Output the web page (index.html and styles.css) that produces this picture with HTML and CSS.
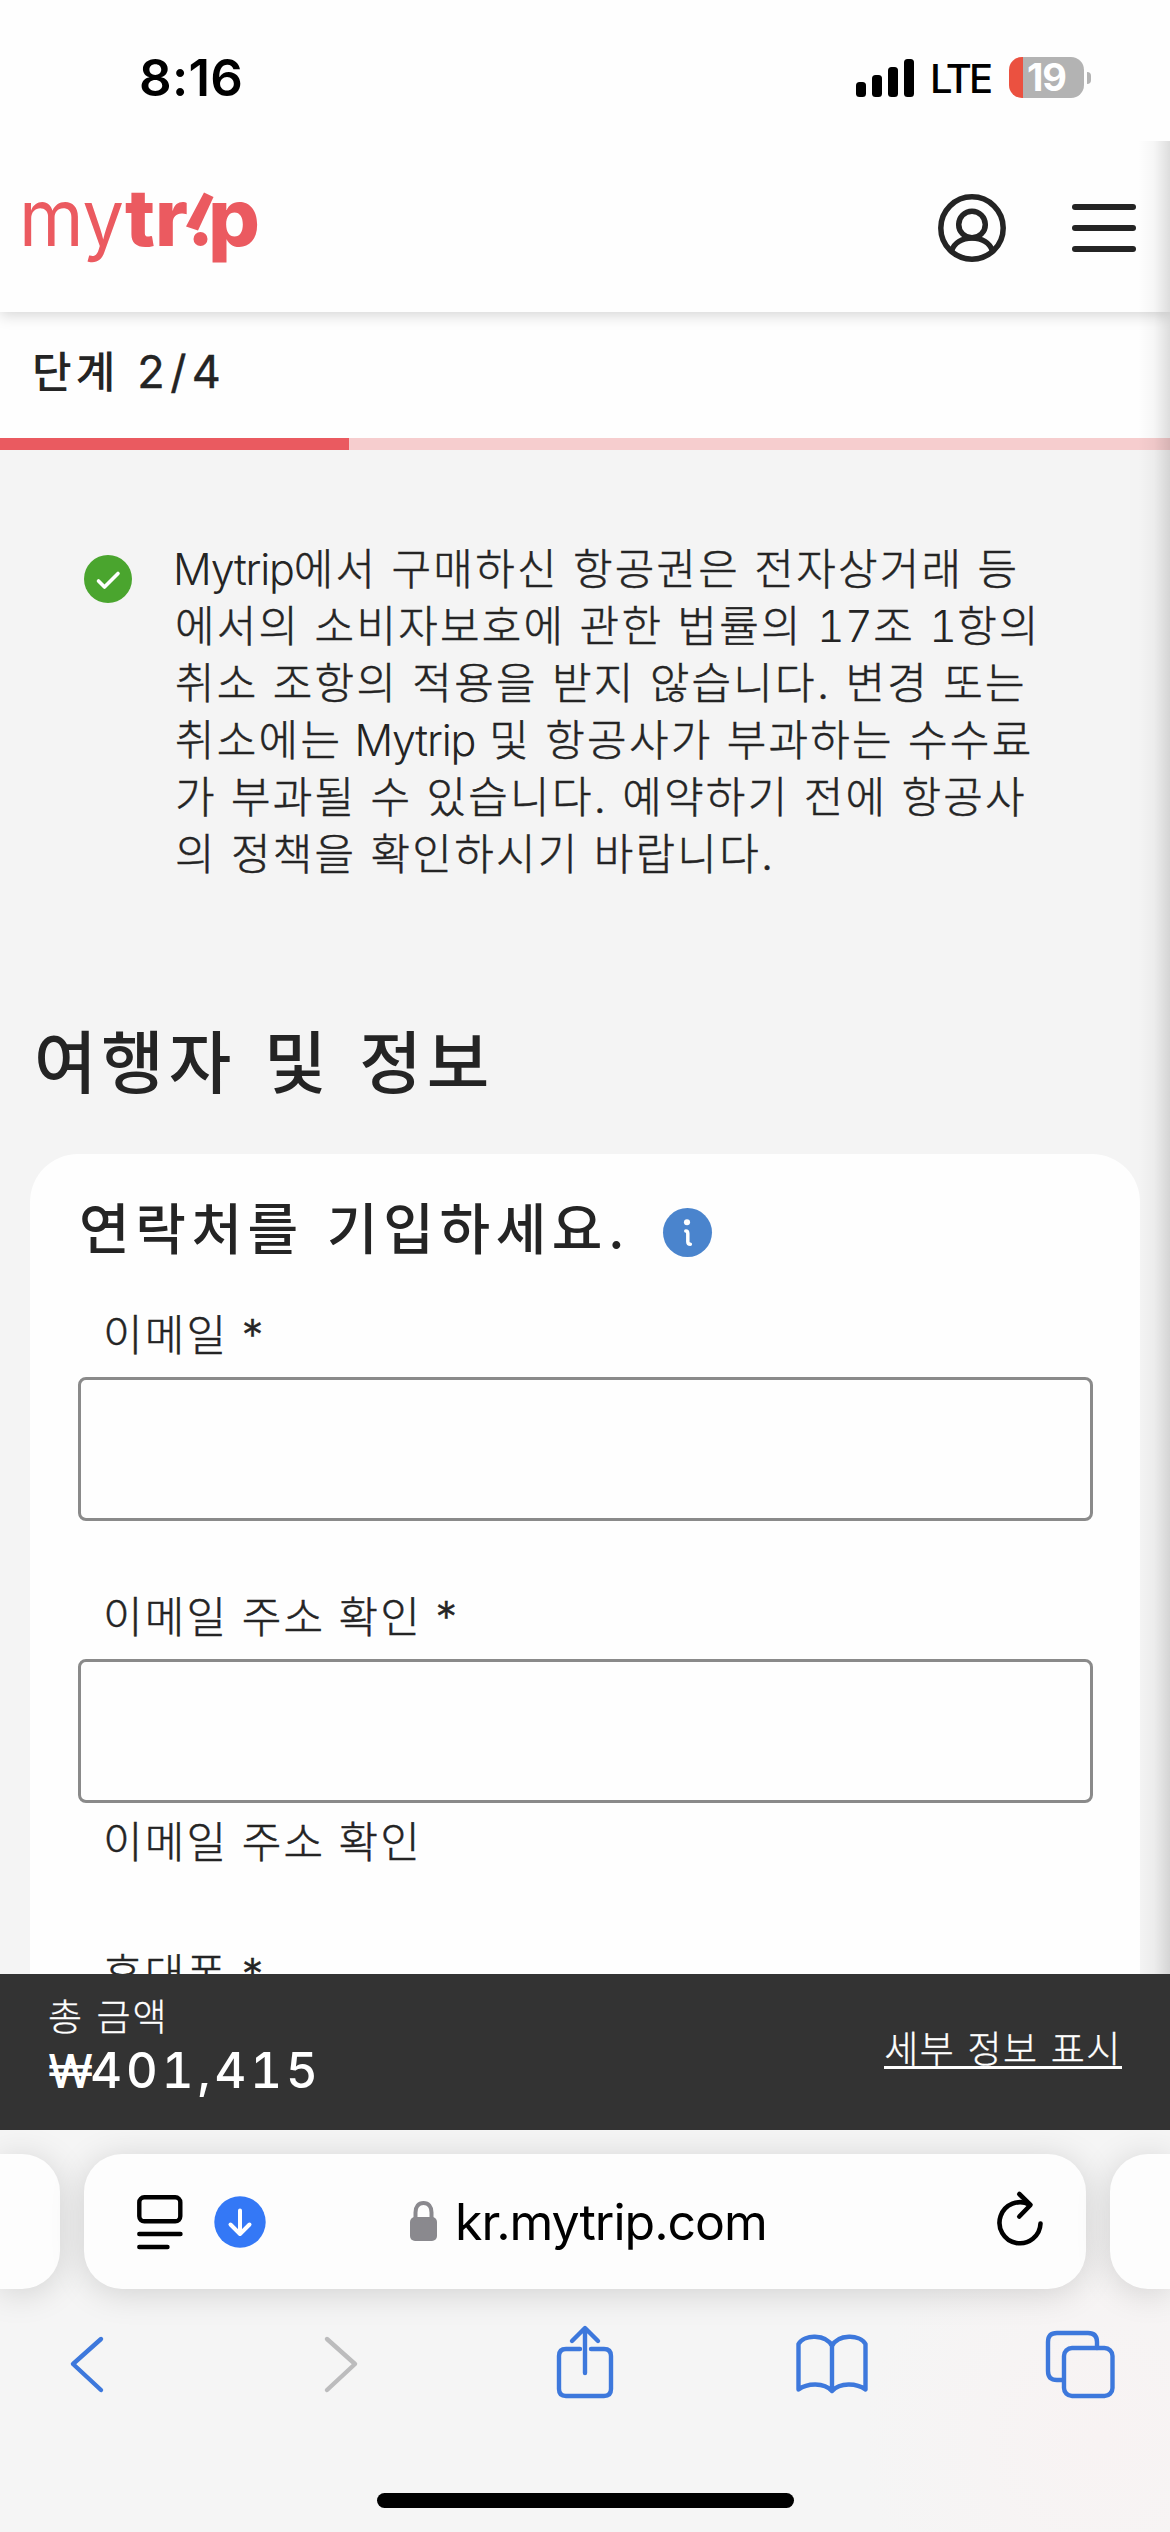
FILE: index.html
```html
<!DOCTYPE html>
<html lang="ko">
<head>
<meta charset="utf-8">
<title>Mytrip</title>
<link rel="stylesheet" href="styles.css">
</head>
<body>
<div class="phone">
  <div class="status">
    <div class="time">8:16</div>
    <div class="status-right">
      <svg class="signal" viewBox="0 0 58 38"><rect x="0" y="23" width="10" height="15" rx="3.5"/><rect x="16" y="16" width="10" height="22" rx="3.5"/><rect x="32" y="8" width="10" height="30" rx="3.5"/><rect x="48" y="0" width="10" height="38" rx="3.5"/></svg>
      <span class="network">LTE</span>
      <div class="battery"><span class="level">19</span></div>
      <span class="nub"></span>
    </div>
  </div>

  <div class="page">
    <header class="header">
      <svg class="logo" viewBox="0 0 240 84">
        <text class="logo-thin" x="-2" y="61" textLength="105" lengthAdjust="spacingAndGlyphs">my</text>
        <text class="logo-bold" x="104" y="61" textLength="63" lengthAdjust="spacingAndGlyphs">tr</text>
        <path d="M183 7.500L192.500 12L177 45.500L165 41.500Z"/>
        <circle cx="179.500" cy="54" r="7"/>
        <text class="logo-bold" x="187" y="61" textLength="52" lengthAdjust="spacingAndGlyphs">p</text>
      </svg>
      <div class="header-actions">
        <svg class="user" viewBox="0 0 68 68"><circle cx="34" cy="34" r="31.200"/><circle cx="34" cy="30.500" r="13.300"/><path d="M13.500 57C16 49 24 44 34 44S52 49 54.500 57"/></svg>
        <div class="menu"><i></i><i></i><i></i></div>
      </div>
    </header>

    <div class="step">단계 <span class="step-num">2/4</span></div>
    <div class="progress"><div class="progress-fill"></div></div>

    <main class="main">
      <div class="notice">
        <svg class="check" viewBox="0 0 48 48"><circle cx="24" cy="24" r="24"/><path d="M14.500 26L20.500 32L34 18.500"/></svg>
        <p class="notice-text"><span class="line"><span class="latin">Mytrip</span>에서 구매하신 항공권은 전자상거래 등</span><span class="line">에서의 소비자보호에 관한 법률의 <span class="num">17</span>조 <span class="num">1</span>항의</span><span class="line">취소 조항의 적용을 받지 않습니다. 변경 또는</span><span class="line">취소에는 <span class="latin">Mytrip</span> 및 항공사가 부과하는 수수료</span><span class="line">가 부과될 수 있습니다. 예약하기 전에 항공사</span><span class="line">의 정책을 확인하시기 바랍니다.</span></p>
      </div>

      <h1 class="title">여행자 및 정보</h1>

      <section class="card">
        <div class="card-head">
          <h2 class="card-title">연락처를 기입하세요.</h2>
          <svg class="info" viewBox="0 0 48 48"><circle cx="24" cy="24" r="24"/><path d="M22.300 22.500Q24.300 22.500 24.300 25V33Q24.300 35.500 26.800 35.500"/><circle class="dot" cx="23.500" cy="14" r="3"/></svg>
        </div>
        <label class="label">이메일 *</label>
        <div class="input"></div>
        <label class="label label-next">이메일 주소 확인 *</label>
        <div class="input"></div>
        <div class="hint">이메일 주소 확인</div>
        <label class="label label-phone">휴대폰 *</label>
      </section>
    </main>
    <div class="edge-shadow"></div>
  </div>

  <div class="total">
    <div class="total-left">
      <div class="total-label">총 금액</div>
      <div class="total-price"><span class="won">₩</span>401,415</div>
    </div>
    <a class="details">세부 정보 표시</a>
  </div>

  <div class="browser">
    <div class="tabs">
      <div class="tab tab-prev"></div>
      <div class="tab tab-current">
        <svg class="reader" viewBox="0 0 46 54"><rect x="2.300" y="2.300" width="41" height="24" rx="5"/><path d="M2.300 39H43.500M2.300 52H30.500"/></svg>
        <svg class="download" viewBox="0 0 52 52"><circle cx="26" cy="26" r="25.700"/><path d="M26 14.500V37M16.500 28.500L26 38L35.500 28.500"/></svg>
        <svg class="lock" viewBox="0 0 27 40"><rect x="0" y="16" width="27" height="24" rx="5"/><path d="M5.500 18V11.500C5.500 5.500 8.500 2 13.500 2S21.500 5.500 21.500 11.500V18"/></svg>
        <span class="url">kr.mytrip.com</span>
        <svg class="reload" viewBox="0 0 50 60"><path d="M45.500 33.500A20.500 20.500 0 1 1 34.500 14.600"/><path d="M24.300 4L35.500 15L24.300 26.500"/></svg>
      </div>
      <div class="tab tab-next"></div>
    </div>
    <div class="tools">
      <svg class="tool back" viewBox="0 0 80 80"><path d="M55 16L27 41L55 67"/></svg>
      <svg class="tool forward" viewBox="0 0 80 80"><path d="M27 16L55 41L27 67"/></svg>
      <svg class="tool" viewBox="0 0 80 80"><path d="M34 26H20Q13 26 13 33V66Q13 73 20 73H58Q65 73 65 66V33Q65 26 58 26H45M39 50V6M26 18L39 5L52 18"/></svg>
      <svg class="tool" viewBox="0 0 80 80"><path d="M40 68V23C34 11 12 11 6.500 21V66.500C15 60 32 59 40 68C48 59 65 60 73.500 66.500V21C68 11 46 11 40 23"/></svg>
      <svg class="tool" viewBox="0 0 80 80"><path d="M25 57H19Q10 57 10 48V19Q10 10 19 10H50Q59 10 59 19V25"/><rect x="26" y="25" width="48.500" height="48" rx="8"/></svg>
    </div>
    <div class="home"></div>
  </div>
</div>
</body>
</html>
```
FILE: styles.css
```css
* { box-sizing: border-box; }
body {
  margin: 0;
  background: #f4f4f4;
  color: #242424;
  font-family: Inter, "Noto Sans CJK KR", sans-serif;
}
svg { display: block; flex: none; fill: none; stroke-linecap: round; stroke-linejoin: round; overflow: visible; }
.phone { width: 1170px; height: 2532px; overflow: hidden; display: flex; flex-direction: column; }

/* status bar */
.status { height: 141px; flex: none; background: #fefefe; color: #000; display: flex; justify-content: space-between; padding: 0 79px 0 139px; }
.time { font-size: 51px; font-weight: 600; line-height: 60px; margin-top: 48px; letter-spacing: 0.3px; }
.status-right { display: flex; height: 41px; margin-top: 57px; align-items: center; }
.signal { width: 58px; height: 38px; fill: #000; }
.network { font-size: 40px; font-weight: 500; line-height: 44px; width: 63px; margin: 3px 13px 0 16px; letter-spacing: -3px; }
.battery { width: 75px; height: 41px; border-radius: 13px; background: linear-gradient(90deg, #eb5140 14px, #b3b3b3 14px); display: flex; justify-content: center; align-items: center; margin-left: 3px; }
.level { color: #fff; font-weight: 700; font-size: 38px; line-height: 41px; letter-spacing: -1px; }
.nub { width: 4px; height: 12px; margin-left: 3px; border-radius: 0 4px 4px 0; background: #b3b3b3; }

/* page */
.page { height: 1833px; flex: none; position: relative; overflow: hidden; }
.header { height: 171px; background: #fefefe; position: relative; display: flex; justify-content: space-between; padding: 44px 34px 0 21px; box-shadow: 0 3px 14px rgba(0, 0, 0, .17); }
.logo { width: 240px; height: 84px; fill: #eb5a60; }
.logo text { font-size: 79px; }
.logo-thin { font-weight: 400; }
.logo-bold { font-weight: 800; }
.header-actions { display: flex; gap: 66px; padding-top: 9px; }
.user { width: 68px; height: 68px; stroke: #242424; stroke-width: 5.5; }
.menu { width: 64px; height: 48px; margin-top: 10px; display: flex; flex-direction: column; justify-content: space-between; }
.menu i { height: 6px; border-radius: 3px; background: #242424; }
.step { height: 126px; background: #fefefe; padding: 31px 32px; font-size: 43px; font-weight: 500; line-height: 58px; letter-spacing: 4.2px; word-spacing: 2px; }
.step-num { font-size: 45px; font-weight: 400; letter-spacing: 5.5px; -webkit-text-stroke: .4px #242424; }
.progress { height: 12px; background: #f6cdce; }
.progress-fill { width: 349px; height: 12px; background: #ea5a60; }
.main { background: #f4f4f4; padding: 91px 30px 0; }
.notice { display: flex; padding-left: 54px; }
.check { width: 48px; height: 48px; margin-top: 14px; fill: #4aa52e; }
.check path { fill: none; stroke: #fff; stroke-width: 3.6; }
.notice-text { margin: 0 0 0 43px; font-size: 43px; font-weight: 300; line-height: 57px; letter-spacing: 2.25px; word-spacing: -.2px; -webkit-text-stroke: .5px #242424; }
.line { display: block; white-space: nowrap; }
.latin { letter-spacing: -1.2px; margin-left: -2px; -webkit-text-stroke: 0; }
.num { letter-spacing: .3px; font-feature-settings: "tnum"; -webkit-text-stroke: 0; }
.title { margin: 140px 0 0 4px; font-size: 68px; font-weight: 500; line-height: 80px; letter-spacing: 4.8px; word-spacing: 5px; }
.card { margin-top: 51px; height: 900px; padding: 44px 47px 0 48px; border-radius: 48px 48px 0 0; background: #fefefe; }
.card-head { display: flex; align-items: center; height: 62px; }
.card-title { margin: 0 0 0 1px; font-size: 55px; font-weight: 500; line-height: 62px; letter-spacing: 5.6px; word-spacing: 3px; }
.info { width: 49px; height: 49px; margin-left: 33px; margin-top: 7px; fill: #4a84cd; }
.info path { fill: none; stroke: #fff; stroke-width: 3.4; }
.info .dot { fill: #fff; }
.label, .hint { display: block; font-size: 43px; font-weight: 300; line-height: 58px; letter-spacing: 2.2px; word-spacing: -.9px; padding-left: 25px; -webkit-text-stroke: .5px #242424; }
.label { margin-top: 46px; }
.input { height: 144px; margin-top: 13px; border: 3px solid #8a8a8a; border-radius: 8px; }
.label-next { margin-top: 67px; }
.hint { margin-top: 10px; }
.label-phone { margin-top: 74px; }
.edge-shadow { position: absolute; top: 0; right: 0; bottom: 0; width: 32px; background: linear-gradient(90deg, rgba(0, 0, 0, 0), rgba(0, 0, 0, .03) 50%, rgba(0, 0, 0, .13)); }

/* total bar */
.total { height: 156px; flex: none; background: #333; color: #fff; display: flex; justify-content: space-between; padding: 0 48px; }
.total-label { margin-top: 22px; font-size: 37px; font-weight: 300; line-height: 44px; letter-spacing: 2px; -webkit-text-stroke: .3px #fff; }
.total-price { margin-top: 1px; font-size: 49px; font-weight: 500; line-height: 60px; letter-spacing: 4px; font-feature-settings: "tnum"; }
.won { font-size: 46px; letter-spacing: -3px; }
.details { margin-top: 53px; height: 42px; border-bottom: 3px solid #fff; font-size: 37px; font-weight: 300; line-height: 46px; letter-spacing: 1.6px; -webkit-text-stroke: .3px #fff; }

/* browser chrome */
.browser { height: 402px; flex: none; background: radial-gradient(circle at 1100px 310px, #f8f3f3, #f5f5f5 240px); overflow: hidden; }
.tabs { display: grid; grid-template-columns: 60px 1002px 60px; gap: 24px; height: 135px; margin-top: 24px; }
.tab { background: #fdfdfd; box-shadow: 0 4px 34px rgba(0, 0, 0, .15); }
.tab-prev { border-radius: 0 38px 38px 0; }
.tab-next { border-radius: 38px 0 0 38px; }
.tab-current { border-radius: 38px; display: flex; align-items: center; padding: 0 41px 0 53px; }
.reader { width: 46px; height: 54px; stroke: #000; stroke-width: 4.4; overflow: visible; }
.download { width: 52px; height: 52px; margin-left: 31px; fill: #3478f6; }
.download path { fill: none; stroke: #fff; stroke-width: 4; }
.lock { width: 27px; height: 40px; margin-left: 144px; margin-top: -2px; fill: #8a898e; }
.lock path { fill: none; stroke: #8a898e; stroke-width: 4; }
.url { margin-left: 18px; color: #000; font-size: 50px; line-height: 60px; letter-spacing: -1px; white-space: nowrap; }
.reload { width: 50px; height: 60px; margin-left: auto; margin-top: -4px; stroke: #000; stroke-width: 4.6; }
.tools { display: flex; gap: 166px; margin-top: 34px; padding-left: 46px; }
.back { margin-right: 8px; }
.tool { width: 80px; height: 80px; stroke: #3d78dc; stroke-width: 4.4; }
.tool.forward { stroke: #bcbcbd; }
.home { width: 417px; height: 15px; margin: 90px auto 0; border-radius: 8px; background: #000; }
```
